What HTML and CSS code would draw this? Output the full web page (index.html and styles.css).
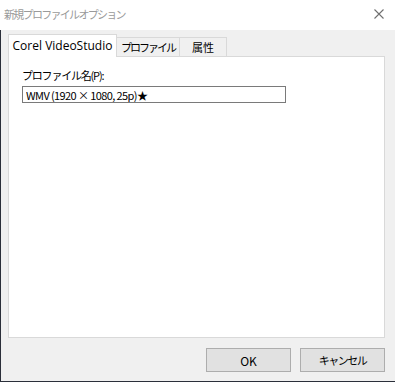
FILE: index.html
```html
<!DOCTYPE html>
<html lang="ja">
<head>
  <meta charset="UTF-8">
  <title>新規プロファイルオプション</title>
  <link rel="stylesheet" href="styles.css">
</head>
<body>
  <div class="window">
    <div class="titlebar">
      <span class="title">新規プロファイルオプション</span>
      <svg class="close" width="10" height="10" viewBox="0 0 10 10">
        <path d="M0.5 0.5 L9.5 9.5 M9.5 0.5 L0.5 9.5" stroke="#6f6f6f" stroke-width="1.1" fill="none"/>
      </svg>
    </div>
    <div class="client">
      <div class="tabs">
        <div class="tab active">Corel VideoStudio</div>
        <div class="tab tab-profile">プロファイル</div>
        <div class="tab tab-attr">属性</div>
      </div>
      <div class="panel">
        <label class="field-label" for="name">プロファイル名(P):</label>
        <input class="field" id="name" type="text" value="WMV (1920 × 1080, 25p)★">
      </div>
      <div class="buttons">
        <button class="btn">OK</button>
        <button class="btn btn-jp">キャンセル</button>
      </div>
    </div>
  </div>
</body>
</html>
```

FILE: styles.css
```css
/* Dialog frame */
body {
  margin: 0;
  font-family: "Noto Sans CJK JP", "Noto Sans", sans-serif;
  font-size: 12px;
  color: #000;
  background: #f0f0f0;
}

.window {
  width: 395px;
  height: 382px;
  display: flex;
  flex-direction: column;
}

.titlebar {
  height: 30px;
  flex: none;
  background: #fff;
  display: flex;
  align-items: center;
  justify-content: space-between;
  padding: 0 11px 0 4px;
}

.title {
  color: #9a9a9a;
  font-size: 11px;
  letter-spacing: -1.7px;
  margin-top: -3px;
}

.close {
  margin-top: -3px;
}

.client {
  flex: 1;
  background: #f0f0f0;
  border-left: 1px solid #2b2f3a;
  border-bottom: 1px solid #2b2f3a;
  padding: 4px 10px 0 7px;
  display: flex;
  flex-direction: column;
}

/* Tabs */
.tabs {
  display: flex;
  align-items: flex-end;
  height: 22px;
}

.tab {
  box-sizing: border-box;
  height: 19px;
  border: 1px solid #d9d9d9;
  border-bottom: none;
  background: #f0f0f0;
  display: flex;
  align-items: center;
  justify-content: center;
  font-size: 11px;
  line-height: 1;
  white-space: nowrap;
}

.tab.active {
  width: 109px;
  height: 23px;
  margin-bottom: -1px;
  background: #fff;
  position: relative;
  z-index: 1;
  font-family: "Open Sans", "Noto Sans", sans-serif;
  font-size: 12px;
  padding-bottom: 1px;
}

.tab-profile {
  width: 63px;
  border-left: none;
  letter-spacing: -2px;
}

.tab-attr {
  width: 47px;
  border-left: none;
}

/* Page content */
.panel {
  height: 282px;
  box-sizing: border-box;
  background: #fff;
  border: 1px solid #d9d9d9;
  padding: 10px 13px;
  display: flex;
  flex-direction: column;
  align-items: flex-start;
}

.field-label {
  line-height: 16px;
  font-size: 11px;
  letter-spacing: -1.2px;
  margin-bottom: 3px;
}

.field {
  box-sizing: border-box;
  width: 264px;
  height: 17px;
  border: 1px solid #7a7a7a;
  padding: 0 3px;
  margin: 0;
  font-family: "Noto Sans CJK JP", "Noto Sans", sans-serif;
  font-size: 11px;
  letter-spacing: -0.6px;
  color: #000;
  outline: none;
}

/* Buttons */
.buttons {
  display: flex;
  justify-content: flex-end;
  gap: 9px;
  margin-top: 10px;
}

.btn {
  box-sizing: border-box;
  width: 85px;
  height: 24px;
  background: #e1e1e1;
  border: 1px solid #adadad;
  font-family: "Noto Sans CJK JP", "Noto Sans", sans-serif;
  font-size: 12px;
  color: #000;
  padding: 0;
}

.btn-jp {
  font-size: 11px;
  letter-spacing: -1.5px;
}
```
